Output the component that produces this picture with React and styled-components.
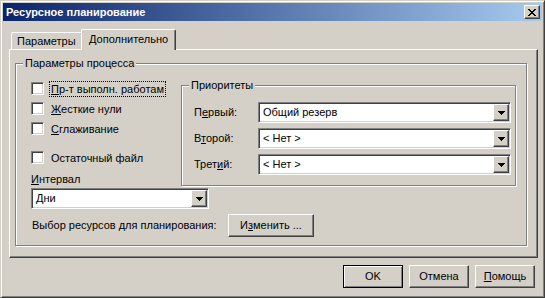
import React from 'react';
import styled, { createGlobalStyle, css } from 'styled-components';

const FACE = '#D4D0C8';

const GlobalStyle = createGlobalStyle`
  html, body { margin: 0; padding: 0; background: ${FACE}; }
  body {
    font-family: "Liberation Sans", Arial, sans-serif;
    font-size: 11px;
    color: #000;
  }
  *, *::before, *::after { box-sizing: border-box; }
  u { text-decoration-thickness: 1px; text-underline-offset: 1px; }
`;

const Window = styled.div`
  width: 545px;
  height: 298px;
  background: ${FACE};
  border: 1px solid;
  border-color: ${FACE} #404040 #404040 ${FACE};
  box-shadow: inset 1px 1px 0 #fff, inset -1px -1px 0 #808080;
  padding: 2px;
  display: flex;
  flex-direction: column;
`;

const TitleBar = styled.div`
  height: 18px;
  flex: none;
  display: flex;
  align-items: center;
  justify-content: space-between;
  padding: 0 2px 0 3px;
  background: linear-gradient(to right, #0a246a, #a6caf0);
`;

const Title = styled.span`
  color: #fff;
  font-weight: bold;
  line-height: 13px;
`;

const raised = css`
  background: ${FACE};
  border: 1px solid;
  border-color: #fff #404040 #404040 #fff;
  box-shadow: inset -1px -1px 0 #808080;
`;

const sunken = css`
  background: #fff;
  border: 1px solid;
  border-color: #808080 #fff #fff #808080;
  box-shadow: inset 1px 1px 0 #404040, inset -1px -1px 0 ${FACE};
`;

const CloseButton = styled.div`
  ${raised};
  width: 16px;
  height: 14px;
  display: flex;
  align-items: center;
  justify-content: center;
  padding-right: 1px;
`;

const Body = styled.div`
  flex: 1;
  display: flex;
  flex-direction: column;
  padding: 8px 4px 0 6px;
`;

const TabStrip = styled.div`
  height: 20px;
  display: flex;
  align-items: flex-end;
  padding-left: 2px;
  position: relative;
  z-index: 1;
`;

const Tab = styled.div`
  background: ${FACE};
  border-left: 1px solid #fff;
  border-top: 1px solid #fff;
  border-right: 1px solid #404040;
  border-radius: 2px 2px 0 0;
  box-shadow: inset -1px 0 0 #808080;
  line-height: 13px;
  white-space: nowrap;
  ${(p) =>
    p.$active
      ? css`
          width: 95px;
          height: 21px;
          margin: 0 0 -1px -2px;
          padding: 3px 0 0 7px;
          position: relative;
          z-index: 1;
        `
      : css`
          width: 72px;
          height: 17px;
          padding: 2px 0 0 5px;
        `}
`;

const Panel = styled.div`
  height: 209px;
  border: 1px solid;
  border-color: #fff #404040 #404040 #fff;
  box-shadow: inset -1px -1px 0 #808080;
  padding: 13px 0 0 5px;
`;

const GroupBox = styled.div`
  width: ${(p) => p.$w}px;
  margin-top: ${(p) => p.$mt || 0}px;
  border: 1px solid #808080;
  box-shadow: inset 1px 1px 0 #fff, 1px 1px 0 #fff;
  display: flex;
  flex-direction: column;
`;

const Legend = styled.span`
  align-self: flex-start;
  margin: -7px 0 0 7px;
  padding: 0 2px;
  background: ${FACE};
  line-height: 13px;
  white-space: nowrap;
`;

const ProcessBody = styled.div`
  display: grid;
  grid-template-columns: 150px 335px;
  padding: 9px 10px 8px 15px;
`;

const LeftColumn = styled.div`
  display: flex;
  flex-direction: column;
  padding-top: 2px;
`;

const CheckRow = styled.div`
  display: flex;
  align-items: flex-start;
  height: 16px;
  margin-top: ${(p) => p.$mt || 0}px;
`;

const CheckBox = styled.span`
  ${sunken};
  width: 13px;
  height: 13px;
  flex: none;
  margin-top: 1px;
`;

const CheckLabel = styled.span`
  margin-left: 5px;
  height: 16px;
  padding: 1px 1px 0 1px;
  line-height: 13px;
  white-space: nowrap;
  border: 1px ${(p) => (p.$focus ? 'dotted #000' : 'solid transparent')};
`;

const FieldLabel = styled.span`
  line-height: 13px;
  margin-top: ${(p) => p.$mt || 0}px;
  white-space: nowrap;
`;

const PrioBody = styled.div`
  display: grid;
  grid-template-columns: 64px 253px;
  row-gap: 5px;
  align-items: center;
  padding: 10px 4px 6px 12px;
`;

const ComboBox = styled.div`
  ${sunken};
  height: 21px;
  width: ${(p) => p.$w}px;
  padding: 1px;
  display: flex;
  align-items: center;
  ${(p) =>
    p.$span &&
    css`
      grid-column: 1 / -1;
      justify-self: start;
      margin-top: 2px;
    `}
`;

const ComboValue = styled.span`
  flex: 1;
  padding-left: 3px;
  line-height: 13px;
  white-space: nowrap;
  overflow: hidden;
`;

const DropButton = styled.span`
  ${raised};
  width: 16px;
  height: 17px;
  flex: none;
  display: flex;
  align-items: center;
  justify-content: center;
`;

const ResRow = styled.div`
  grid-column: 1 / -1;
  display: flex;
  align-items: center;
  margin-top: 5px;
`;

const ResLabel = styled.span`
  width: 197px;
  padding-left: 1px;
  line-height: 13px;
  white-space: nowrap;
`;

const Button = styled.div`
  ${raised};
  width: ${(p) => p.$w || 60}px;
  height: 23px;
  display: flex;
  align-items: center;
  justify-content: center;
  line-height: 13px;
  white-space: nowrap;
  ${(p) =>
    p.$default &&
    css`
      border-color: #000;
      box-shadow: inset 1px 1px 0 #fff, inset -1px -1px 0 #808080;
    `}
`;

const ButtonRow = styled.div`
  display: flex;
  justify-content: flex-end;
  gap: 6px;
  margin-top: 7px;
  padding-right: 3px;
`;

const CloseGlyph = () => (
  <svg width="8" height="7" viewBox="0 0 8 7" shapeRendering="crispEdges">
    <path
      d="M0 0h2v1H0zM6 0h2v1H6zM1 1h2v1H1zM5 1h2v1H5zM2 2h4v1H2zM3 3h2v1H3zM2 4h4v1H2zM1 5h2v1H1zM5 5h2v1H5zM0 6h2v1H0zM6 6h2v1H6z"
      fill="#000"
    />
  </svg>
);

const Arrow = () => (
  <svg width="7" height="4" viewBox="0 0 7 4" shapeRendering="crispEdges">
    <path d="M0 0h7v1H0zM1 1h5v1H1zM2 2h3v1H2zM3 3h1v1H3z" fill="#000" />
  </svg>
);

const Combo = ({ value, w, span }) => (
  <ComboBox $w={w} $span={span}>
    <ComboValue>{value}</ComboValue>
    <DropButton>
      <Arrow />
    </DropButton>
  </ComboBox>
);

const Check = ({ children, focus, mt }) => (
  <CheckRow $mt={mt}>
    <CheckBox />
    <CheckLabel $focus={focus}>{children}</CheckLabel>
  </CheckRow>
);

export default function App() {
  return (
    <>
      <GlobalStyle />
      <Window>
        <TitleBar>
          <Title>Ресурсное планирование</Title>
          <CloseButton>
            <CloseGlyph />
          </CloseButton>
        </TitleBar>
        <Body>
          <TabStrip>
            <Tab>Параметры</Tab>
            <Tab $active>Дополнительно</Tab>
          </TabStrip>
          <Panel>
            <GroupBox $w={512}>
              <Legend>Параметры процесса</Legend>
              <ProcessBody>
                <LeftColumn>
                  <Check focus>
                    <u>П</u>р-т выполн. работам
                  </Check>
                  <Check mt={4}>
                    <u>Ж</u>есткие нули
                  </Check>
                  <Check mt={4}>
                    <u>С</u>глаживание
                  </Check>
                  <Check mt={13}>Остаточный файл</Check>
                  <FieldLabel $mt={7}>
                    <u>И</u>нтервал
                  </FieldLabel>
                </LeftColumn>
                <GroupBox $w={335} $mt={6}>
                  <Legend>Приоритеты</Legend>
                  <PrioBody>
                    <FieldLabel>
                      П<u>е</u>рвый:
                    </FieldLabel>
                    <Combo value="Общий резерв" w={253} />
                    <FieldLabel>
                      В<u>т</u>орой:
                    </FieldLabel>
                    <Combo value="< Нет >" w={253} />
                    <FieldLabel>
                      Трет<u>и</u>й:
                    </FieldLabel>
                    <Combo value="< Нет >" w={253} />
                  </PrioBody>
                </GroupBox>
                <Combo value="Дни" w={178} span />
                <ResRow>
                  <ResLabel>Выбор ресурсов для планирования:</ResLabel>
                  <Button $w={86}>
                    И<u>з</u>менить ...
                  </Button>
                </ResRow>
              </ProcessBody>
            </GroupBox>
          </Panel>
          <ButtonRow>
            <Button $default>OK</Button>
            <Button>Отмена</Button>
            <Button>
              <u>П</u>омощь
            </Button>
          </ButtonRow>
        </Body>
      </Window>
    </>
  );
}
